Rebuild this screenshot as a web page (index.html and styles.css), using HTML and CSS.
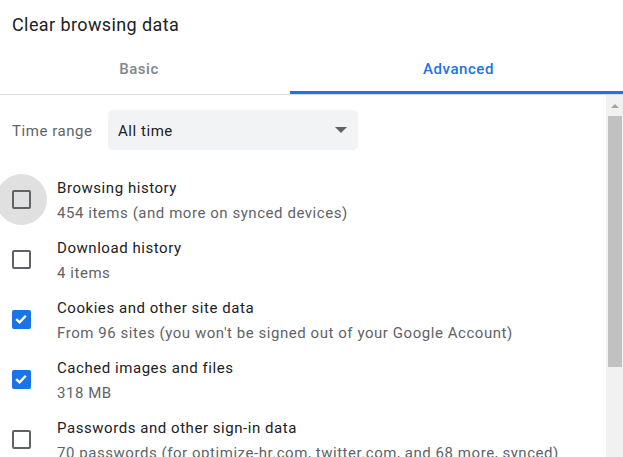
FILE: index.html
```html
<!DOCTYPE html>
<html>
<head>
<meta charset="utf-8">
<link rel="stylesheet" href="styles.css">
</head>
<body>
<div class="dialog">
  <div class="title">Clear browsing data</div>
  <div class="tabs">
    <div class="tab tab-basic">Basic</div>
    <div class="tab tab-adv">Advanced</div>
  </div>
  <div class="body">
    <div class="main">
      <div class="range">
        <span class="range-label">Time range</span>
        <div class="select">
          <span>All time</span>
          <span class="caret"></span>
        </div>
      </div>
      <div class="row">
        <div class="cb-wrap"><span class="ripple"></span><span class="cb"></span></div>
        <div class="texts">
          <div class="t1">Browsing history</div>
          <div class="t2">454 items (and more on synced devices)</div>
        </div>
      </div>
      <div class="row">
        <div class="cb-wrap"><span class="cb"></span></div>
        <div class="texts">
          <div class="t1">Download history</div>
          <div class="t2">4 items</div>
        </div>
      </div>
      <div class="row">
        <div class="cb-wrap"><span class="cb checked"><svg viewBox="0 0 20 20" width="20" height="20"><path d="M5.2 10.2 L8.6 13.4 L14.8 6.8" fill="none" stroke="#fff" stroke-width="2.4"/></svg></span></div>
        <div class="texts">
          <div class="t1">Cookies and other site data</div>
          <div class="t2">From 96 sites (you won't be signed out of your Google Account)</div>
        </div>
      </div>
      <div class="row">
        <div class="cb-wrap"><span class="cb checked"><svg viewBox="0 0 20 20" width="20" height="20"><path d="M5.2 10.2 L8.6 13.4 L14.8 6.8" fill="none" stroke="#fff" stroke-width="2.4"/></svg></span></div>
        <div class="texts">
          <div class="t1">Cached images and files</div>
          <div class="t2">318 MB</div>
        </div>
      </div>
      <div class="row">
        <div class="cb-wrap"><span class="cb"></span></div>
        <div class="texts">
          <div class="t1">Passwords and other sign-in data</div>
          <div class="t2">70 passwords (for optimize-hr.com, twitter.com, and 68 more, synced)</div>
        </div>
      </div>
    </div>
    <div class="scrollbar">
      <div class="sb-up"><span class="sb-arrow"></span></div>
      <div class="sb-thumb"></div>
    </div>
  </div>
</div>
</body>
</html>
```
FILE: styles.css
```css
html, body {
  margin: 0;
  padding: 0;
  background: #fff;
}
body {
  font-family: Roboto, "Noto Sans", Arial, sans-serif;
  color: #202124;
  width: 623px;
  height: 457px;
  overflow: hidden;
}
.dialog {
  display: flex;
  flex-direction: column;
  height: 457px;
}
.title {
  font-size: 18px;
  letter-spacing: 0.4px;
  line-height: 20px;
  padding: 15px 12px 0 12px;
  height: 29px;
  color: #202124;
}
.tabs {
  display: flex;
  height: 50px;
  border-bottom: 1px solid #dadce0;
  flex-shrink: 0;
}
.tab {
  font-size: 15px;
  letter-spacing: 0.55px;
  font-weight: 500;
  display: flex;
  align-items: center;
  justify-content: center;
  box-sizing: border-box;
}
.tab-basic {
  width: 278px;
  margin-right: 12px;
  color: #80868b;
}
.tab-adv {
  flex: 1;
  color: #1a73e8;
  border-bottom: 3px solid #1a73e8;
  padding-top: 3px;
  padding-left: 4px;
}
.body {
  display: flex;
  flex: 1;
  min-height: 0;
}
.main {
  flex: 1;
  padding: 15px 0 0 12px;
  overflow: hidden;
}
.range {
  display: flex;
  align-items: center;
  height: 40px;
}
.range-label {
  font-size: 15px;
  letter-spacing: 0.55px;
  color: #5f6368;
  width: 96px;
  padding-top: 2px;
}
.select {
  width: 250px;
  height: 40px;
  box-sizing: border-box;
  background: #f1f3f4;
  border-radius: 5px;
  display: flex;
  align-items: center;
  justify-content: space-between;
  padding: 2px 11px 0 10px;
  font-size: 15px;
  letter-spacing: 0.55px;
  color: #202124;
}
.caret {
  width: 0;
  height: 0;
  margin-top: -2px;
  border-left: 6px solid transparent;
  border-right: 6px solid transparent;
  border-top: 6px solid #5f6368;
}
.range + .row {
  margin-top: 20px;
}
.row {
  display: flex;
  align-items: center;
  height: 60px;
}
.cb-wrap {
  position: relative;
  width: 45px;
  height: 20px;
  flex-shrink: 0;
}
.ripple {
  position: absolute;
  left: -16px;
  top: -16px;
  width: 51px;
  height: 51px;
  border-radius: 50%;
  background: #e0e0e0;
}
.cb {
  position: absolute;
  left: 0;
  top: 0;
  width: 19px;
  height: 19px;
  box-sizing: border-box;
  border: 2.5px solid #5f6368;
  border-radius: 2px;
}
.cb.checked {
  background: #1a73e8;
  border-color: #1a73e8;
}
.cb svg {
  position: absolute;
  left: -3px;
  top: -3px;
  width: 20px;
  height: 20px;
}
.texts {
  display: flex;
  flex-direction: column;
  gap: 5px;
  white-space: nowrap;
}
.t1 {
  font-size: 15px;
  letter-spacing: 0.55px;
  line-height: 20px;
  color: #202124;
}
.t2 {
  font-size: 15px;
  letter-spacing: 0.55px;
  line-height: 20px;
  color: #5f6368;
}
.scrollbar {
  width: 17px;
  background: #f1f1f1;
  display: flex;
  flex-direction: column;
  flex-shrink: 0;
}
.sb-up {
  height: 21px;
  display: flex;
  justify-content: center;
  align-items: center;
}
.sb-arrow {
  width: 0;
  height: 0;
  border-left: 4px solid transparent;
  border-right: 4px solid transparent;
  border-bottom: 4px solid #a3a3a3;
}
.sb-thumb {
  height: 251px;
  margin: 0 1px 0 2px;
  background: #c1c1c1;
}
```
